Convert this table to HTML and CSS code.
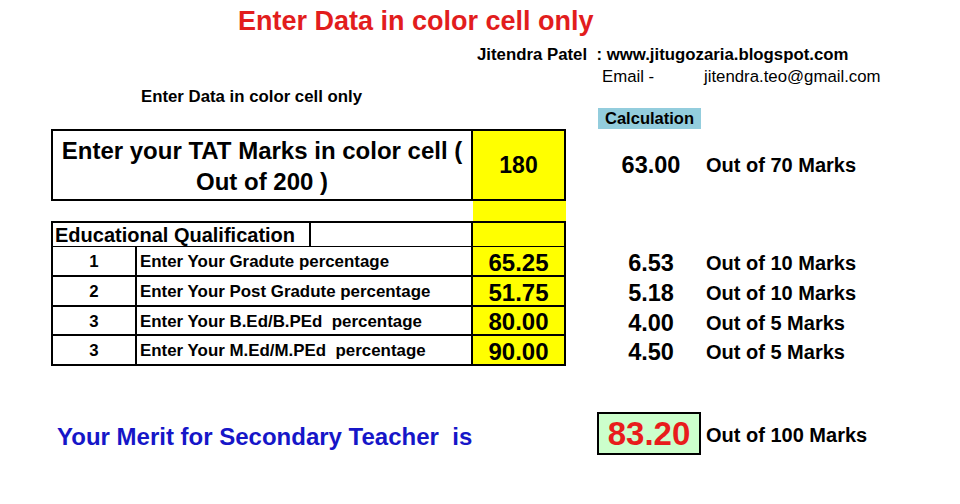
FILE: index.html
```html
<!DOCTYPE html>
<html>
<head>
<meta charset="utf-8">
<link rel="stylesheet" href="styles.css">
</head>
<body>
<div class="page">
  <div class="title">Enter Data in color cell only</div>
  <div class="author">Jitendra Patel  : www.jitugozaria.blogspot.com</div>
  <div class="email"><span class="email-label">Email -</span>jitendra.teo@gmail.com</div>
  <div class="note">Enter Data in color cell only</div>
  <div class="calc-head"><span class="calc-label">Calculation</span></div>

  <div class="sheet">
    <div class="tat-label">Enter your TAT Marks in color cell (<br>Out of 200 )</div>
    <div class="tat-value">180</div>
    <div class="calc-num">63.00</div>
    <div class="calc-text">Out of 70 Marks</div>

    <div class="strip"></div>

    <div class="edu-head"><span class="edu-title">Educational Qualification</span></div>
    <div class="edu-yellow"></div>

    <div class="num">1</div>
    <div class="label">Enter Your Gradute percentage</div>
    <div class="value">65.25</div>
    <div class="calc-num row">6.53</div>
    <div class="calc-text row">Out of 10 Marks</div>

    <div class="num">2</div>
    <div class="label">Enter Your Post Gradute percentage</div>
    <div class="value">51.75</div>
    <div class="calc-num row">5.18</div>
    <div class="calc-text row">Out of 10 Marks</div>

    <div class="num">3</div>
    <div class="label">Enter Your B.Ed/B.PEd  percentage</div>
    <div class="value">80.00</div>
    <div class="calc-num row">4.00</div>
    <div class="calc-text row">Out of 5 Marks</div>

    <div class="num">3</div>
    <div class="label">Enter Your M.Ed/M.PEd  percentage</div>
    <div class="value">90.00</div>
    <div class="calc-num row">4.50</div>
    <div class="calc-text row">Out of 5 Marks</div>

    <div class="gap-row"></div>

    <div class="merit">Your Merit for Secondary Teacher  is</div>
    <div class="result">83.20</div>
    <div class="result-text">Out of 100 Marks</div>
  </div>
</div>
</body>
</html>
```

FILE: styles.css
```css
* { box-sizing: border-box; }
html, body { margin: 0; padding: 0; background: #fff; }
body {
  font-family: "Liberation Sans", Arial, sans-serif;
  color: #000;
  font-weight: bold;
}
.page { width: 960px; height: 504px; overflow: hidden; }

.title {
  height: 42px;
  line-height: 42px;
  padding-left: 238px;
  font-size: 27px;
  color: #e21d1d;
}
.author {
  height: 26px;
  line-height: 26px;
  padding-left: 477px;
  font-size: 16.8px;
  white-space: pre;
}
.email {
  height: 18px;
  line-height: 18px;
  padding-left: 602px;
  font-size: 16.8px;
  font-weight: normal;
}
.email-label { display: inline-block; width: 102px; }
.note {
  height: 22px;
  line-height: 22px;
  padding-left: 141px;
  font-size: 16.8px;
}
.calc-head { height: 21px; padding-left: 598px; }
.calc-label {
  display: block;
  width: 103px;
  height: 21px;
  line-height: 21px;
  background: #93cddd;
  text-align: center;
  font-size: 16.5px;
}

.sheet {
  display: grid;
  padding-left: 51px;
  grid-template-columns: 86px 336px 93px 31px 108px 1fr;
  grid-template-rows: 72px 20px 26px 30px 30px 29px 30px 46px 43px;
}

.tat-label {
  grid-column: 1 / 3;
  border: 2px solid #000;
  display: flex;
  align-items: center;
  justify-content: center;
  text-align: center;
  font-size: 24px;
  line-height: 31px;
  padding-top: 2px;
}
.tat-value {
  grid-column: 3;
  border: 2px solid #000;
  border-left: none;
  background: #ffff00;
  display: flex;
  align-items: center;
  justify-content: center;
  font-size: 23px;
}
.calc-num {
  grid-column: 5;
  display: flex;
  align-items: center;
  justify-content: center;
  font-size: 23.5px;
}
.calc-text {
  grid-column: 6;
  display: flex;
  align-items: center;
  padding-left: 1px;
  font-size: 20px;
}
.row { padding-top: 3px; }
.strip {
  grid-column: 3;
  background: #ffff00;
}
.edu-head {
  grid-column: 1 / 3;
  border: 2px solid #000;
  border-bottom-width: 1px;
  display: flex;
}
.edu-title {
  width: 258px;
  border-right: 2px solid #000;
  padding-left: 2px;
  padding-top: 1px;
  font-size: 20px;
  line-height: 22px;
}
.edu-yellow {
  grid-column: 3;
  background: #ffff00;
  border: 2px solid #000;
  border-left: none;
  border-bottom-width: 1px;
}
.num {
  grid-column: 1;
  border-left: 2px solid #000;
  border-right: 2px solid #000;
  border-bottom: 2px solid #000;
  display: flex;
  align-items: center;
  justify-content: center;
  padding-top: 2px;
  font-size: 16.8px;
}
.label {
  grid-column: 2;
  border-right: 2px solid #000;
  border-bottom: 2px solid #000;
  display: flex;
  align-items: center;
  padding-left: 3px;
  padding-top: 2px;
  font-size: 16.9px;
  white-space: pre;
}
.value {
  grid-column: 3;
  border-right: 2px solid #000;
  border-bottom: 2px solid #000;
  background: #ffff00;
  display: flex;
  align-items: center;
  justify-content: center;
  padding-top: 3px;
  font-size: 24px;
}
.gap-row { grid-column: 1 / -1; }
.merit {
  grid-column: 1 / 4;
  display: flex;
  align-items: center;
  padding-left: 6px;
  padding-top: 7px;
  color: #1616c8;
  font-size: 24px;
  white-space: pre;
}
.result {
  grid-column: 5;
  margin-right: 4px;
  border: 2px solid #000;
  background: #ccffcc;
  color: #e81c1c;
  display: flex;
  align-items: center;
  justify-content: center;
  font-size: 33px;
}
.result-text {
  grid-column: 6;
  display: flex;
  align-items: center;
  padding-left: 1px;
  padding-top: 3px;
  font-size: 20px;
}
```
